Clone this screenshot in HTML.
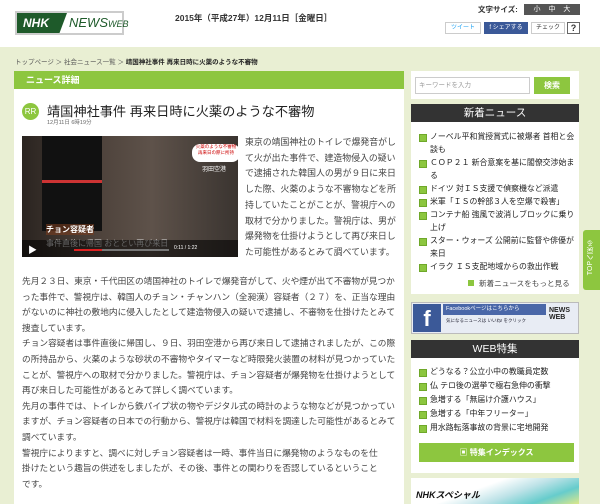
<!DOCTYPE html>
<html><head><meta charset="utf-8"><style>
*{margin:0;padding:0;box-sizing:border-box}
body{width:600px;height:504px;overflow:hidden;font-family:"Liberation Sans","Noto Sans CJK JP",sans-serif;background:#e9efd3;position:relative;color:#333}
.abs{position:absolute}
#hdr{left:0;top:0;width:600px;height:47px;background:#fff}
.li{position:relative;padding-left:12px;font-size:7.9px;line-height:13px;color:#222}
.li:before{content:"";position:absolute;left:1px;top:3.5px;width:6px;height:6px;background:#8cc63f;border:1px solid #6fa82a}
</style></head><body>
<div id="hdr" class="abs">
 <div class="abs" style="left:15px;top:11px;width:109px;height:24px;border:2px solid #ccc;background:#fff">
  <div class="abs" style="left:0;top:0;width:50px;height:20px;background:#1e5a2a;clip-path:polygon(0 0,100% 0,85% 100%,0 100%);color:#fff;font-weight:bold;font-style:italic;font-size:12px;line-height:20px;padding-left:6px">NHK</div>
  <div class="abs" style="left:52px;top:2px;font-style:italic;font-size:13px;color:#1e5a2a">NEWS<span style="font-size:9px">WEB</span></div>
 </div>
 <div class="abs" style="left:175px;top:12px;font-size:8.5px;font-weight:bold;color:#333">2015年（平成27年）12月11日［金曜日］</div>
 <div class="abs" style="left:478px;top:4px;font-size:7.5px;font-weight:bold">文字サイズ:</div>
 <div class="abs" style="left:524px;top:4px;width:56px;height:11px;background:#555;color:#fff;font-size:7px;line-height:11px;text-align:center;word-spacing:6px">小 中 大</div>
 <div class="abs" style="left:445px;top:22px;width:36px;height:12px;border:1px solid #ccc;font-size:6px;line-height:10px;color:#1da1f2;text-align:center">ツイート</div>
 <div class="abs" style="left:484px;top:22px;width:44px;height:12px;background:#3b5998;color:#fff;font-size:6px;line-height:12px;text-align:center">f シェアする</div>
 <div class="abs" style="left:531px;top:22px;width:34px;height:12px;border:1px solid #ccc;font-size:6px;line-height:10px;text-align:center">チェック</div>
 <div class="abs" style="left:567px;top:22px;width:13px;height:12px;border:1px solid #666;font-size:9px;line-height:10px;text-align:center;font-weight:bold">?</div>
</div>
<div class="abs" style="left:15px;top:56px;font-size:6.5px;color:#555">トップページ ＞ 社会ニュース一覧 ＞ <b style="color:#222">靖国神社事件 再来日時に火薬のような不審物</b></div>
<!-- main -->
<div class="abs" style="left:14px;top:71px;width:390px;height:433px;background:#fff"></div>
<div class="abs" style="left:14px;top:71px;width:390px;height:18px;background:#8dc63f;color:#fff;font-weight:bold;font-size:9px;line-height:18px;padding-left:12px">ニュース詳細</div>
<div class="abs" style="left:22px;top:103px;width:17px;height:17px;border-radius:50%;background:#8dc63f;color:#fff;font-size:8px;line-height:17px;text-align:center">RR</div>
<div class="abs" style="left:47px;top:101px;font-size:13.2px;color:#222;white-space:nowrap">靖国神社事件 再来日時に火薬のような不審物</div>
<div class="abs" style="left:47px;top:118px;font-size:5.5px;color:#666">12月11日 6時19分</div>
<div class="abs" style="left:22px;top:136px;width:216px;height:121px;background:linear-gradient(90deg,#2a2420 0%,#4a3f38 30%,#5e524a 60%,#3a3430 100%);overflow:hidden">
 <div class="abs" style="left:20px;top:0;width:60px;height:95px;background:#111"></div>
 <div class="abs" style="left:20px;top:44px;width:60px;height:3px;background:#c33"></div>
 <div class="abs" style="left:170px;top:8px;width:48px;height:18px;background:#fff;border-radius:8px;font-size:4.5px;color:#c00;text-align:center">火薬のような不審物<br>再来日の際に所持</div>
 <div class="abs" style="left:180px;top:28px;font-size:6px;color:#fff">羽田空港</div>
 <div class="abs" style="left:24px;top:88px;font-size:8px;color:#fff;font-weight:bold;background:rgba(120,60,30,.6)">チョン容疑者</div>
 <div class="abs" style="left:24px;top:102px;font-size:8px;color:#ddd">事件直後に帰国 おととい再び来日</div>
 <div class="abs" style="left:0;top:104px;width:216px;height:17px;background:rgba(0,0,0,.55)"></div>
 <div class="abs" style="left:52px;top:113px;width:95px;height:2px;background:#777"></div>
 <div class="abs" style="left:52px;top:113px;width:28px;height:2px;background:#d22"></div>
 <div class="abs" style="left:6px;top:107px;font-size:9px;color:#fff">▶</div>
 <div class="abs" style="left:152px;top:109px;font-size:5px;color:#fff">0:11 / 1:22</div>
</div>
<div class="abs" style="left:245px;top:135px;width:155px;font-size:8.9px;line-height:15.7px;color:#444">東京の靖国神社のトイレで爆発音がして火が出た事件で、建造物侵入の疑いで逮捕された韓国人の男が９日に来日した際、火薬のような不審物などを所持していたことがことが、警視庁への取材で分かりました。警視庁は、男が爆発物を仕掛けようとして再び来日した可能性があるとみて調べています。</div>
<div class="abs" style="left:22px;top:274px;width:376px;font-size:8.7px;line-height:15.6px;color:#444">先月２３日、東京・千代田区の靖国神社のトイレで爆発音がして、火や煙が出て不審物が見つかった事件で、警視庁は、韓国人のチョン・チャンハン（全昶漢）容疑者（２７）を、正当な理由がないのに神社の敷地内に侵入したとして建造物侵入の疑いで逮捕し、不審物を仕掛けたとみて捜査しています。<br>チョン容疑者は事件直後に帰国し、９日、羽田空港から再び来日して逮捕されましたが、この際の所持品から、火薬のような砂状の不審物やタイマーなど時限発火装置の材料が見つかっていたことが、警視庁への取材で分かりました。警視庁は、チョン容疑者が爆発物を仕掛けようとして再び来日した可能性があるとみて詳しく調べています。<br>先月の事件では、トイレから鉄パイプ状の物やデジタル式の時計のような物などが見つかっていますが、チョン容疑者の日本での行動から、警視庁は韓国で材料を調達した可能性があるとみて調べています。<br><span style="white-space:nowrap">警視庁によりますと、調べに対しチョン容疑者は一時、事件当日に爆発物のようなものを仕</span><br><span style="white-space:nowrap">掛けたという趣旨の供述をしましたが、その後、事件との関わりを否認しているということ</span><br>です。</div>
<!-- sidebar -->
<div class="abs" style="left:411px;top:71px;width:168px;height:28px;background:#fff"></div>
<div class="abs" style="left:415px;top:77px;width:115px;height:17px;border:1px solid #ccc;font-size:6.5px;color:#999;line-height:15px;padding-left:3px">キーワードを入力</div>
<div class="abs" style="left:534px;top:77px;width:36px;height:17px;background:#8dc63f;color:#fff;font-size:8px;line-height:17px;text-align:center;font-weight:bold">検索</div>
<div class="abs" style="left:411px;top:104px;width:168px;height:190px;background:#fff"></div>
<div class="abs" style="left:411px;top:104px;width:168px;height:18px;background:#333;color:#fff;font-size:10.5px;line-height:18px;text-align:center">新着ニュース</div>
<div class="abs" style="left:418px;top:130px;width:158px">
<div class="li">ノーベル平和賞授賞式に被爆者 首相と会談も</div>
<div class="li">ＣＯＰ２１ 新合意案を基に閣僚交渉始まる</div>
<div class="li">ドイツ 対ＩＳ支援で偵察機など派遣</div>
<div class="li">米軍「ＩＳの幹部３人を空爆で殺害」</div>
<div class="li">コンテナ船 強風で波消しブロックに乗り上げ</div>
<div class="li">スター・ウォーズ 公開前に監督や俳優が来日</div>
<div class="li">イラク ＩＳ支配地域からの救出作戦</div>
</div>
<div class="abs" style="left:468px;top:278px;font-size:7.6px;color:#444;padding-left:11px"><span style="position:absolute;left:0;top:2px;width:6px;height:6px;background:#8cc63f"></span>新着ニュースをもっと見る</div>
<div class="abs" style="left:411px;top:302px;width:168px;height:32px;background:#e8ecf4;border:1px solid #bbb"></div>
<div class="abs" style="left:413px;top:304px;width:28px;height:28px;background:#3b5998;color:#fff;font-weight:bold;font-size:22px;text-align:center;line-height:30px">f</div>
<div class="abs" style="left:443px;top:304px;width:103px;height:11px;background:#4a67a8;color:#fff;font-size:5.5px;line-height:11px;padding-left:3px">Facebookページはこちらから</div>
<div class="abs" style="left:446px;top:318px;font-size:4.5px;color:#223">気になるニュースは いいね! をクリック</div>
<div class="abs" style="left:549px;top:307px;font-size:7px;line-height:7px;color:#222;font-weight:bold">NEWS<br>WEB</div>
<div class="abs" style="left:411px;top:340px;width:168px;height:133px;background:#fff"></div>
<div class="abs" style="left:411px;top:340px;width:168px;height:18px;background:#333;color:#fff;font-size:10.5px;line-height:18px;text-align:center">WEB特集</div>
<div class="abs" style="left:418px;top:365px;width:158px">
<div class="li" style="line-height:14px">どうなる？公立小中の教職員定数</div>
<div class="li" style="line-height:14px">仏 テロ後の選挙で極右急伸の衝撃</div>
<div class="li" style="line-height:14px">急増する「無届け介護ハウス」</div>
<div class="li" style="line-height:14px">急増する「中年フリーター」</div>
<div class="li" style="line-height:14px">用水路転落事故の背景に宅地開発</div>
</div>
<div class="abs" style="left:419px;top:443px;width:155px;height:19px;background:#8dc63f;color:#fff;font-size:8px;font-weight:bold;line-height:19px;text-align:center">▣ 特集インデックス</div>
<div class="abs" style="left:411px;top:478px;width:168px;height:26px;background:linear-gradient(160deg,#fff 40%,#bfe3e8 60%,#6cc 80%,#dde88a 100%)"></div>
<div class="abs" style="left:416px;top:488px;font-size:9px;font-weight:bold;font-style:italic;color:#111">NHKスペシャル</div>
<div class="abs" style="left:583px;top:230px;width:17px;height:60px;background:#8dc63f;border-radius:3px 0 0 3px"></div>
<div class="abs" style="left:586px;top:240px;font-size:7px;color:#fff;writing-mode:vertical-rl;transform:rotate(180deg)">TOPへ戻る</div>
</body></html>
